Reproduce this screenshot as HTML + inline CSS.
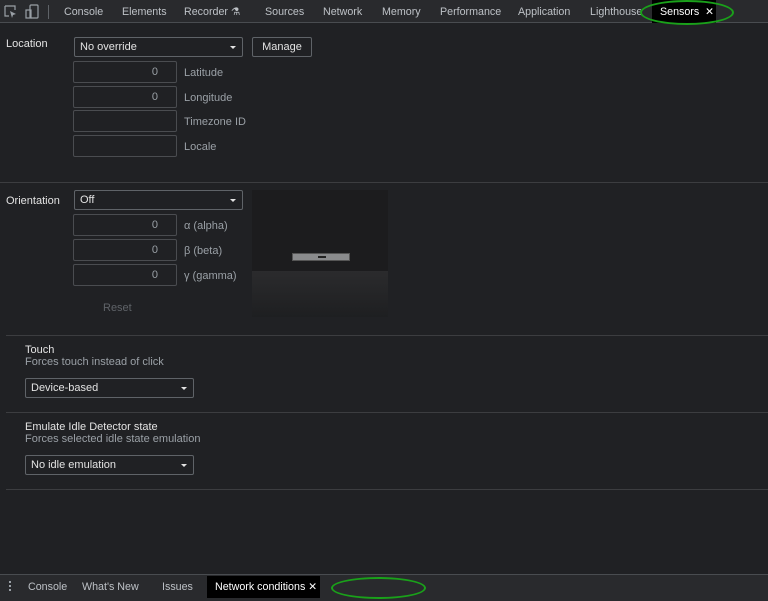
<!DOCTYPE html>
<html><head><style>
*{box-sizing:border-box;margin:0;padding:0}
html,body{width:768px;height:601px;overflow:hidden}
body{background:#202124;font-family:"Liberation Sans",sans-serif;font-size:11px;color:#e3e3e3;position:relative;white-space:nowrap}
.a{position:absolute}
.tb{left:0;top:0;width:768px;height:23px;background:#292a2d;border-bottom:1px solid #494c50}
.tab{top:1px;height:23px;line-height:23px;color:#bdc1c6;font-size:10.7px}
.inp{position:absolute;height:22px;border:1px solid #4a4c50;border-radius:2px;background:#202124;color:#9aa0a6;text-align:right;padding-right:18px;line-height:20px}
.sel{position:absolute;height:20px;border:1px solid #5f6368;border-radius:2px;background:#202124;color:#e3e3e3;line-height:19px;padding-left:5px}
.sel:after{content:"";position:absolute;right:6px;top:8px;border-left:3px solid transparent;border-right:3px solid transparent;border-top:3px solid #e3e3e3}
.lbl{color:#9aa0a6}
.hr{position:absolute;left:6px;width:762px;height:1px;background:#3c3d40}
</style></head><body>
<div class="a tb"></div>
<svg class="a" style="left:4px;top:5px" width="14" height="14" viewBox="0 0 14 14"><path d="M1 1h10v4M1 1v10h4" fill="none" stroke="#9aa0a6" stroke-width="1.2"/><path d="M6 6l6 3-3 1-1 3z" fill="#9aa0a6"/></svg>
<svg class="a" style="left:25px;top:4px" width="14" height="15" viewBox="0 0 14 15"><rect x="5" y="1" width="8" height="13" rx="1" fill="none" stroke="#9aa0a6" stroke-width="1.2"/><rect x="1" y="6" width="5" height="8" fill="none" stroke="#9aa0a6" stroke-width="1.2"/></svg>
<div class="a" style="left:48px;top:5px;width:1px;height:14px;background:#5f6368"></div>
<div class="a tab" style="left:64px">Console</div>
<div class="a tab" style="left:122px">Elements</div>
<div class="a tab" style="left:184px">Recorder ⚗</div>
<div class="a tab" style="left:265px">Sources</div>
<div class="a tab" style="left:323px">Network</div>
<div class="a tab" style="left:382px">Memory</div>
<div class="a tab" style="left:440px">Performance</div>
<div class="a tab" style="left:518px">Application</div>
<div class="a tab" style="left:590px">Lighthouse</div>
<div class="a" style="left:652px;top:0;width:64px;height:23px;background:#000;color:#fff;line-height:24px;padding-left:8px;font-size:10.7px">Sensors&nbsp;&nbsp;✕</div>
<div class="a" style="left:640px;top:0;width:94px;height:25px;border:2px solid #1aa11a;border-radius:50%"></div>

<div class="a" style="left:6px;top:38px;color:#e3e3e3">Location</div>
<div class="sel" style="left:74px;top:37px;width:169px">No override</div>
<div class="a" style="left:252px;top:37px;width:60px;height:20px;border:1px solid #5f6368;border-radius:2px;text-align:center;line-height:19px;color:#e3e3e3">Manage</div>
<div class="inp" style="left:73px;top:61px;width:104px">0</div><div class="a lbl" style="left:184px;top:67px">Latitude</div>
<div class="inp" style="left:73px;top:86px;width:104px">0</div><div class="a lbl" style="left:184px;top:92px">Longitude</div>
<div class="inp" style="left:73px;top:110px;width:104px"></div><div class="a lbl" style="left:184px;top:116px">Timezone ID</div>
<div class="inp" style="left:73px;top:135px;width:104px"></div><div class="a lbl" style="left:184px;top:141px">Locale</div>
<div class="hr" style="top:182px;left:0;width:768px"></div>

<div class="a" style="left:6px;top:195px">Orientation</div>
<div class="sel" style="left:74px;top:190px;width:169px">Off</div>
<div class="inp" style="left:73px;top:214px;width:104px">0</div><div class="a lbl" style="left:184px;top:220px">α (alpha)</div>
<div class="inp" style="left:73px;top:239px;width:104px">0</div><div class="a lbl" style="left:184px;top:245px">β (beta)</div>
<div class="inp" style="left:73px;top:264px;width:104px">0</div><div class="a lbl" style="left:184px;top:270px">γ (gamma)</div>
<div class="a" style="left:103px;top:302px;color:#5f6368">Reset</div>
<div class="a" style="left:252px;top:190px;width:136px;height:81px;background:#1c1c1e"></div>
<div class="a" style="left:252px;top:271px;width:136px;height:46px;background:linear-gradient(#2b2b2d,#1e1f21)"></div>
<div class="a" style="left:292px;top:253px;width:58px;height:8px;background:#8a8b8d;border:1px solid #555"></div>
<div class="a" style="left:318px;top:256px;width:8px;height:2px;background:#222"></div>
<div class="hr" style="top:335px"></div>

<div class="a" style="left:25px;top:344px">Touch</div>
<div class="a lbl" style="left:25px;top:356px">Forces touch instead of click</div>
<div class="sel" style="left:25px;top:378px;width:169px">Device-based</div>
<div class="hr" style="top:412px"></div>
<div class="a" style="left:25px;top:421px">Emulate Idle Detector state</div>
<div class="a lbl" style="left:25px;top:433px">Forces selected idle state emulation</div>
<div class="sel" style="left:25px;top:455px;width:169px">No idle emulation</div>
<div class="hr" style="top:489px"></div>

<div class="a" style="left:0;top:574px;width:768px;height:27px;background:#292a2d;border-top:1px solid #494c50"></div>
<div class="a" style="left:9px;top:581px;width:2px;height:2px;background:#9aa0a6;box-shadow:0 4px #9aa0a6,0 8px #9aa0a6"></div>
<div class="a tab" style="left:28px;top:576px">Console</div>
<div class="a tab" style="left:82px;top:576px">What's New</div>
<div class="a tab" style="left:162px;top:576px">Issues</div>
<div class="a" style="left:207px;top:576px;width:113px;height:22px;background:#000;color:#fff;line-height:22px;padding-left:8px;font-size:10.7px">Network conditions&nbsp;✕</div>
<div class="a" style="left:331px;top:577px;width:95px;height:22px;border:2px solid #1aa11a;border-radius:50%"></div>
</body></html>
